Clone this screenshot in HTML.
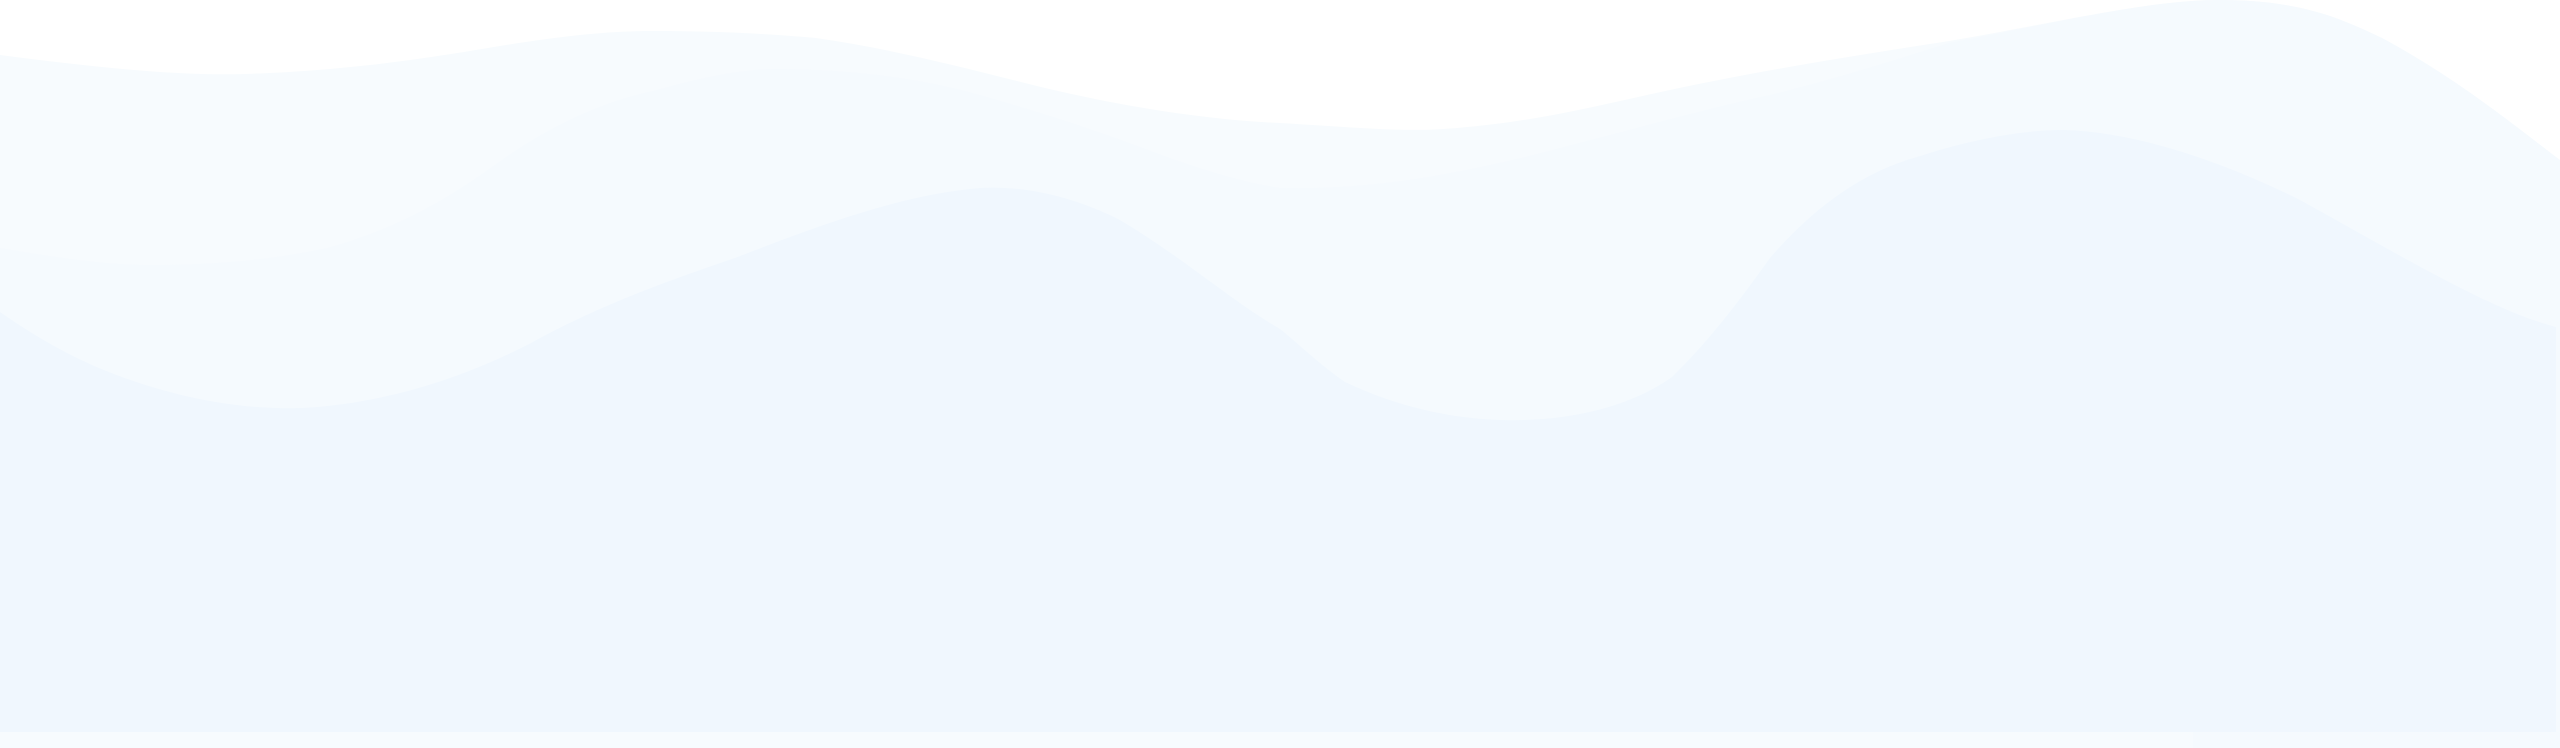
<!DOCTYPE html>
<html><head><meta charset="utf-8"><style>
html,body{margin:0;padding:0;background:#fff;}
svg{display:block}
</style></head><body>
<svg width="2560" height="748" viewBox="0 0 2560 748" xmlns="http://www.w3.org/2000/svg">
<rect width="2560" height="748" fill="#ffffff"/>
<path fill="#f7fbfe" d="M0,55 C100,68 180,76 245,74 C360,70 440,56 506,45 C570,35 610,31 653,31 C720,31 770,34 816,38 C900,50 980,72 1045,88 C1130,108 1210,120 1280,123 C1350,127 1400,132 1443,129 C1520,124 1580,110 1647,95 C1760,70 1860,55 1949,41 C2060,22 2150,0 2219,0 C2300,0 2340,18 2382,38 C2460,80 2520,130 2560,160 L2560,748 L0,748 Z"/>
<path fill="#f5fafe" d="M0,248 C60,258 110,266 163,265 C230,264 280,258 327,248 C410,225 460,190 506,157 C560,120 610,100 653,91 C700,78 740,69 776,69 C850,69 920,78 980,95 C1050,115 1100,132 1143,148 C1190,166 1240,182 1280,188 C1370,190 1450,175 1525,157 C1620,133 1700,110 1770,95 C1850,75 1910,55 1949,43 C2060,22 2150,0 2219,0 C2300,0 2340,18 2382,38 C2460,80 2520,130 2560,160 L2560,748 L0,748 Z"/>
<path fill="#f0f7fe" d="M0,312 C40,340 80,362 122,377 C180,398 240,410 302,408 C380,404 460,380 531,343 C600,305 670,280 735,258 C820,225 900,195 980,188 C1030,185 1080,200 1118,219 C1180,255 1230,300 1280,329 C1300,345 1320,365 1345,382 C1400,408 1460,422 1525,420 C1590,418 1640,400 1672,377 C1710,340 1740,300 1770,258 C1820,200 1870,170 1917,157 C1970,140 2020,130 2064,130 C2140,132 2230,165 2300,200 C2400,255 2490,310 2556,327 L2556,732 L0,732 Z"/>
<rect x="0" y="732" width="2193" height="16" fill="#f7fbfe"/>
</svg>
</body></html>
